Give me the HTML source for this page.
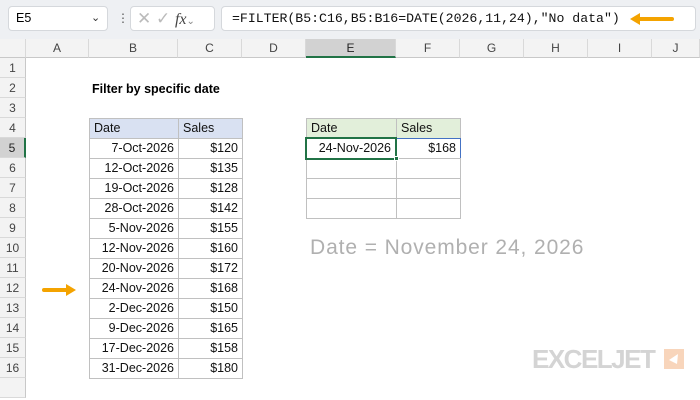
<!DOCTYPE html><html><head><style>
body{margin:0;width:700px;height:400px;overflow:hidden;background:#fff;font-family:"Liberation Sans",sans-serif;position:relative}
div{position:absolute;box-sizing:border-box}
.top{left:0;top:0;width:700px;height:39px;background:#eef0f3}
.box{background:#fff;border:1px solid #d5d8dc;border-radius:4px}
.ch{top:39px;height:19px;background:#f3f3f3;border-right:1px solid #d9d9d9;border-bottom:1px solid #c8c8c8;font-size:12px;color:#444;text-align:center;line-height:19px}
.rh{left:0;width:26px;height:20px;background:#f3f3f3;border-bottom:1px solid #d9d9d9;border-right:1px solid #c8c8c8;font-size:12px;color:#444;text-align:center;line-height:20px}
.c{height:21px;border:1px solid #c0c0c0;font-size:12.5px;line-height:19px;padding:0 4px;color:#111;text-align:right}
.h1{background:#d9e1f2;text-align:left}
.h2{background:#e2efda;text-align:left}
</style></head><body>
<div class="top"></div>
<div class="box" style="left:8px;top:6px;width:100px;height:25px;font-size:12.5px;line-height:23px;padding-left:7px">E5<span style="position:absolute;left:82px;top:0;font-size:11px;color:#333">&#8964;</span></div>
<div style="left:117px;top:12px;font-size:12px;color:#555;line-height:12px">&#8942;</div>
<div class="box" style="left:130px;top:6px;width:85px;height:25px;color:#bbb;font-size:17px;line-height:23px;padding-left:6px">✕ ✓ <i style="font-family:'Liberation Serif',serif;color:#444;font-size:16px">fx</i><span style="font-size:10px;color:#888">&#8964;</span></div>
<div class="box" style="left:221px;top:6px;width:475px;height:25px;font-family:'Liberation Mono',monospace;font-size:13.2px;line-height:23px;padding-left:10px;color:#111">=FILTER(B5:C16,B5:B16=DATE(2026,11,24),"No data")</div>
<svg style="position:absolute;left:628px;top:12px" width="46" height="14"><path d="M44 7H10" stroke="#f4a300" stroke-width="4" stroke-linecap="round"/><path d="M2 7L12 1V13Z" fill="#f4a300"/></svg>
<div class="ch" style="left:0;width:26px"></div>
<div class="ch" style="left:26px;width:63px">A</div>
<div class="ch" style="left:89px;width:89px">B</div>
<div class="ch" style="left:178px;width:64px">C</div>
<div class="ch" style="left:242px;width:64px">D</div>
<div class="ch" style="left:306px;width:90px;background:#d2d2d2;border-bottom:2px solid #217346;color:#222">E</div>
<div class="ch" style="left:396px;width:64px">F</div>
<div class="ch" style="left:460px;width:64px">G</div>
<div class="ch" style="left:524px;width:64px">H</div>
<div class="ch" style="left:588px;width:64px">I</div>
<div class="ch" style="left:652px;width:48px">J</div>
<div class="rh" style="top:58px">1</div><div class="rh" style="top:78px">2</div><div class="rh" style="top:98px">3</div><div class="rh" style="top:118px">4</div>
<div class="rh" style="top:138px;background:#d2d2d2;border-right:2px solid #217346;color:#222">5</div>
<div class="rh" style="top:158px">6</div><div class="rh" style="top:178px">7</div><div class="rh" style="top:198px">8</div><div class="rh" style="top:218px">9</div><div class="rh" style="top:238px">10</div><div class="rh" style="top:258px">11</div><div class="rh" style="top:278px">12</div><div class="rh" style="top:298px">13</div><div class="rh" style="top:318px">14</div><div class="rh" style="top:338px">15</div><div class="rh" style="top:358px">16</div><div class="rh" style="top:378px"></div>
<div style="left:92px;top:80px;font-size:12.5px;font-weight:bold;line-height:18px">Filter by specific date</div>
<div class="c h1" style="left:89px;top:118px;width:90px">Date</div><div class="c h1" style="left:178px;top:118px;width:65px">Sales</div>
<div class="c" style="left:89px;top:138px;width:90px">7-Oct-2026</div><div class="c" style="left:178px;top:138px;width:65px">$120</div>
<div class="c" style="left:89px;top:158px;width:90px">12-Oct-2026</div><div class="c" style="left:178px;top:158px;width:65px">$135</div>
<div class="c" style="left:89px;top:178px;width:90px">19-Oct-2026</div><div class="c" style="left:178px;top:178px;width:65px">$128</div>
<div class="c" style="left:89px;top:198px;width:90px">28-Oct-2026</div><div class="c" style="left:178px;top:198px;width:65px">$142</div>
<div class="c" style="left:89px;top:218px;width:90px">5-Nov-2026</div><div class="c" style="left:178px;top:218px;width:65px">$155</div>
<div class="c" style="left:89px;top:238px;width:90px">12-Nov-2026</div><div class="c" style="left:178px;top:238px;width:65px">$160</div>
<div class="c" style="left:89px;top:258px;width:90px">20-Nov-2026</div><div class="c" style="left:178px;top:258px;width:65px">$172</div>
<div class="c" style="left:89px;top:278px;width:90px">24-Nov-2026</div><div class="c" style="left:178px;top:278px;width:65px">$168</div>
<div class="c" style="left:89px;top:298px;width:90px">2-Dec-2026</div><div class="c" style="left:178px;top:298px;width:65px">$150</div>
<div class="c" style="left:89px;top:318px;width:90px">9-Dec-2026</div><div class="c" style="left:178px;top:318px;width:65px">$165</div>
<div class="c" style="left:89px;top:338px;width:90px">17-Dec-2026</div><div class="c" style="left:178px;top:338px;width:65px">$158</div>
<div class="c" style="left:89px;top:358px;width:90px">31-Dec-2026</div><div class="c" style="left:178px;top:358px;width:65px">$180</div>
<svg style="position:absolute;left:42px;top:283px" width="36" height="14"><path d="M2 7H26" stroke="#f4a300" stroke-width="4" stroke-linecap="round"/><path d="M34 7L24 1V13Z" fill="#f4a300"/></svg>
<div class="c h2" style="left:306px;top:118px;width:91px">Date</div><div class="c h2" style="left:396px;top:118px;width:65px">Sales</div>
<div class="c" style="left:396px;top:138px;width:65px;border:1px solid #4472c4">$168</div>
<div class="c" style="left:306px;top:158px;width:91px"></div><div class="c" style="left:396px;top:158px;width:65px"></div>
<div class="c" style="left:306px;top:178px;width:91px"></div><div class="c" style="left:396px;top:178px;width:65px"></div>
<div class="c" style="left:306px;top:198px;width:91px"></div><div class="c" style="left:396px;top:198px;width:65px"></div>
<div class="c" style="left:305px;top:137px;width:92px;height:23px;border:2px solid #217346;line-height:19px">24-Nov-2026</div>
<div style="left:394px;top:156px;width:5px;height:5px;background:#217346;border:1px solid #fff"></div>
<div style="left:310px;top:236px;font-size:21px;color:#b0b0b0;letter-spacing:0.9px;white-space:nowrap">Date = November 24, 2026</div>
<div style="left:532px;top:344px;font-size:26px;font-weight:900;color:#d4d4d4;letter-spacing:-1.5px;line-height:30px;white-space:nowrap">EXCELJET</div>
<div style="left:664px;top:349px;width:20px;height:20px;background:#f8d5bb"></div>
<svg style="position:absolute;left:667px;top:352px" width="14" height="14"><path d="M2 8L11 2L10 12Z" fill="#fff"/></svg>
</body></html>
